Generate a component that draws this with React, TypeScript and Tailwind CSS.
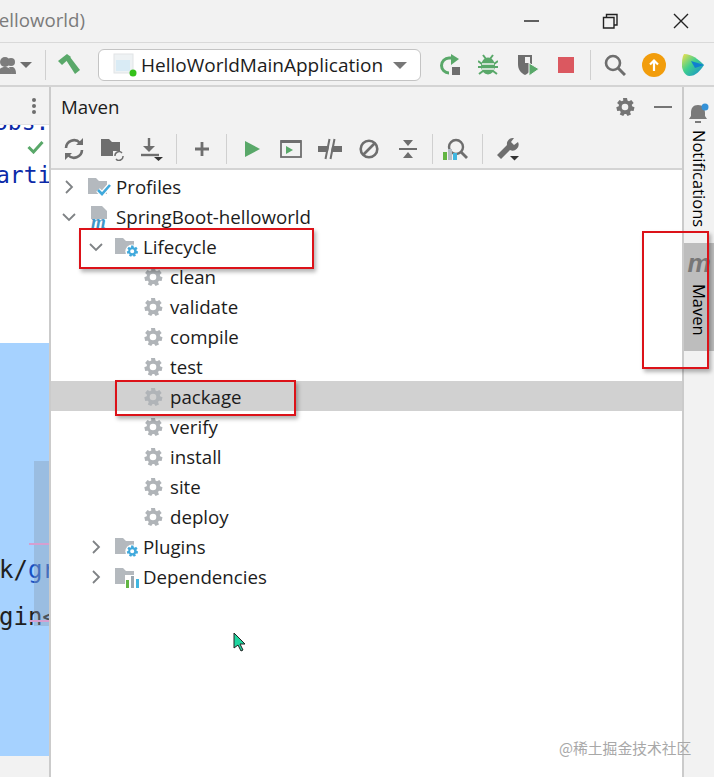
import type { ReactNode } from "react"

const GRAY = "#6e6e6e"
const GREEN = "#59a869"

const Svg = ({ size = 24, w, h, children }: { size?: number; w?: number; h?: number; children: ReactNode }) => (
  <svg width={w ?? size} height={h ?? size} viewBox={`0 0 ${w ?? size} ${h ?? size}`} className="block shrink-0">
    {children}
  </svg>
)

const Slot = ({ children }: { children: ReactNode }) => (
  <div className="flex h-[24px] w-[39px] shrink-0 items-center justify-center">{children}</div>
)

const Sep = () => <div className="mx-[5px] h-[30px] w-px shrink-0 bg-[#d0d0d0]" />

const Gear = ({ color = "#b0b4b8", size = 20 }: { color?: string; size?: number }) => (
  <svg width={size} height={size} viewBox="0 0 20 20" className="block shrink-0">
    <path
      fill={color}
      fillRule="evenodd"
      d="M8 1h4l.5 2.6 1.5.7 2.3-1.4 2.4 3-1.9 1.8.3 1.6 2.4 1-.9 3.700-2.600-.2-1 1.300 1 2.400-3.400 1.600-1.400-2.200h-1.600L8.200 19.100 4.800 17.500l1-2.400-1-1.300-2.600.2L1.300 10.300l2.400-1 .3-1.600L2.100 5.900l2.400-3L6.800 4.300 8.300 3.600zM10 6.700a3.300 3.300 0 1 0 0 6.600 3.300 3.300 0 0 0 0-6.600z"
    />
  </svg>
)

const Chevron = ({ open }: { open?: boolean }) => (
  <svg width={18} height={18} viewBox="0 0 18 18" className="block shrink-0">
    <path d={open ? "M3 6l6 6 6-6" : "M6 3l6 6-6 6"} fill="none" stroke="#7f8285" strokeWidth={1.8} />
  </svg>
)

const Folder = ({ children }: { children?: ReactNode }) => (
  <Svg w={26} h={22}>
    <path d="M1 2h8l3 3h8v13H1z" fill="#b4b9be" />
    {children}
  </Svg>
)

const BlueGear = () => (
  <g transform="translate(12 9) scale(0.62)">
    <circle cx="10" cy="10" r="11" fill="#fff" />
    <path
      fill="#40a9dc"
      fillRule="evenodd"
      d="M8 1h4l.5 2.600 1.500.7 2.300-1.400 2.400 3-1.900 1.800.3 1.600 2.400 1-.9 3.700-2.600-.2-1 1.300 1 2.400-3.400 1.600-1.400-2.200h-1.600L8.200 19.100 4.800 17.500l1-2.400-1-1.300-2.600.2L1.300 10.300l2.400-1 .3-1.600L2.100 5.900l2.400-3L6.800 4.300 8.300 3.600zM10 6.700a3.300 3.300 0 1 0 0 6.600 3.300 3.300 0 0 0 0-6.600z"
    />
  </g>
)

const ToolWindowRow = ({
  indent,
  open,
  icon,
  label,
}: {
  indent: string
  open?: boolean
  icon: ReactNode
  label: string
}) => (
  <div className={`flex h-[30px] items-center pt-[2px] ${indent}`}>
    <Chevron open={open} />
    <div className="ml-[9px] flex w-[26px] justify-center">{icon}</div>
    <span className="ml-[3px]">{label}</span>
  </div>
)

const GoalRow = ({ label, className = "" }: { label: string; className?: string }) => (
  <div className={`flex h-[30px] items-center pl-[92px] pt-[2px] ${className}`}>
    <Gear />
    <span className="ml-[7px]">{label}</span>
  </div>
)

const MavenFile = () => (
  <Svg w={26} h={24}>
    <path d="M4 1h11l5 5v14H4z" fill="#b4b9be" />
    <rect x="1" y="14" width="24" height="10" fill="#fff" />
    <text x="4" y="23" fontFamily="Liberation Serif, serif" fontStyle="italic" fontWeight="700" fontSize="19" fill="#3f97c9">
      m
    </text>
  </Svg>
)

export default function App() {
  const goals = ["clean", "validate", "compile", "test"]
  const goalsAfter = ["verify", "install", "site", "deploy"]

  return (
    <div className="relative flex h-[777px] w-[714px] flex-col overflow-hidden bg-[#f2f2f2] font-['Open_Sans','Noto_Sans',sans-serif] text-[18.7px] text-[#1c1c1c]">
      {/* title bar */}
      <div className="flex h-[43px] shrink-0 items-center border-b border-[#d9d9d9]">
        <div className="flex w-[85px] justify-end overflow-hidden whitespace-nowrap pb-[2px] text-[#7b7b7b]">helloworld)</div>
        <div className="ml-auto flex items-center pr-[25px]">
          <Svg w={16} h={16}>
            <path d="M0 8h15" stroke="#222" strokeWidth={1.4} />
          </Svg>
          <div className="ml-[62px]">
            <Svg w={16} h={16}>
              <path d="M1.500 4.500h10.500v10.500H1.500zM4.500 4.500V1.500h10.500v10.500H12" fill="none" stroke="#222" strokeWidth={1.4} />
            </Svg>
          </div>
          <div className="ml-[55px]">
            <Svg w={16} h={16}>
              <path d="M1 1l14 14M15 1L1 15" stroke="#222" strokeWidth={1.4} />
            </Svg>
          </div>
        </div>
      </div>

      {/* main toolbar */}
      <div className="flex h-[44px] shrink-0 items-center border-b-2 border-[#d4d4d4] pt-[2px]">
        <Svg w={16} h={24}>
          <circle cx="5" cy="9" r="5" fill="#7c7c7c" />
          <path d="M-2 21c0-5 3-7 7-7s7 2 7 7z" fill="#7c7c7c" />
          <circle cx="11" cy="9" r="4" fill="#7c7c7c" />
          <path d="M9 14h4c2 1 3 3 3 7H12z" fill="#7c7c7c" />
        </Svg>
        <div className="ml-[4px]">
          <Svg w={12} h={8}>
            <path d="M0 1h12L6 7z" fill="#6e6e6e" />
          </Svg>
        </div>
        <div className="ml-[13px] h-[30px] w-px bg-[#d0d0d0]" />
        <div className="ml-[11px]">
          <Svg w={24} h={24}>
            <path d="M1 8L10 1l4 3-9 8z" fill={GREEN} />
            <path d="M9 7l4-3 10 13-5 4z" fill={GREEN} />
          </Svg>
        </div>
        <div className="ml-[17px] flex h-[32px] w-[323px] items-center rounded-[6px] border border-[#c4c4c4] bg-white pl-[14px]">
          <Svg w={24} h={24}>
            <rect x="1" y="1" width="19" height="19" fill="#eef2f4" stroke="#e1e4e6" />
            <rect x="3" y="7" width="14" height="11" fill="#d9ebf5" />
            <circle cx="20" cy="20" r="3.500" fill="#35c21b" />
          </Svg>
          <span className="ml-[4px] whitespace-nowrap text-[19px]">HelloWorldMainApplication</span>
          <div className="ml-auto mr-[13px]">
            <Svg w={14} h={9}>
              <path d="M0 1h14L7 8z" fill="#777" />
            </Svg>
          </div>
        </div>
        <div className="ml-[18px]">
          <Svg w={22} h={22}>
            <path d="M10 19a7.500 7.500 0 0 1 0-15h4" fill="none" stroke={GREEN} strokeWidth={3} />
            <path d="M12 0l8 5-8 6z" fill={GREEN} />
            <rect x="13" y="13" width="8" height="8" fill="#6e6e6e" />
          </Svg>
        </div>
        <div className="ml-[17px]">
          <Svg w={20} h={22}>
            <ellipse cx="10" cy="12" rx="7" ry="8.500" fill={GREEN} />
            <path d="M0 7l4 3M20 7l-4 3M0 13h4M20 13h-4M1 20l4-3M19 20l-4-3M5 1l3 4M15 1l-3 4" stroke={GREEN} strokeWidth={2} />
            <path d="M4 10h12M4 15h12" stroke="#f2f2f2" strokeWidth={1.400} />
          </Svg>
        </div>
        <div className="ml-[18px]">
          <Svg w={24} h={24}>
            <path d="M2 2h14v9c0 6-3 9-7 11-4-2-7-5-7-11z" fill="#6e6e6e" />
            <path d="M9 4h5v6H9z" fill="#f2f2f2" />
            <path d="M13 10l10 6-10 7z" fill={GREEN} stroke="#f2f2f2" />
          </Svg>
        </div>
        <div className="ml-[18px] h-[16px] w-[16px] bg-[#db5860]" />
        <div className="ml-[16px] h-[30px] w-px bg-[#d0d0d0]" />
        <div className="ml-[13px]">
          <Svg w={22} h={22}>
            <circle cx="9" cy="9" r="7" fill="none" stroke="#6e6e6e" strokeWidth={2.600} />
            <path d="M14 14l7 7" stroke="#6e6e6e" strokeWidth={3} />
          </Svg>
        </div>
        <div className="ml-[16px] flex h-[24px] w-[24px] items-center justify-center rounded-full bg-[#f29d0c]">
          <Svg w={12} h={14}>
            <path d="M6 13V3M2 6.500L6 2.500l4 4" fill="none" stroke="#fff" strokeWidth={2.200} />
          </Svg>
        </div>
        <div className="ml-[16px]">
          <svg width={22} height={24} viewBox="0 0 22 24" className="block shrink-0">
            <defs>
              <linearGradient id="edge" x1="0" y1="0" x2="1" y2="1">
                <stop offset="0" stopColor="#f4e04a" />
                <stop offset="0.45" stopColor="#3fcf8e" />
                <stop offset="1" stopColor="#1186d8" />
              </linearGradient>
            </defs>
            <path d="M2 1c8 0 14 5 20 11-4 6-8 11-15 11C5 23 1 20 0 14 0 8 0 4 2 1z" fill="url(#edge)" />
            <path d="M9 8l13 4-9 3z" fill="#0f7fd0" />
          </svg>
        </div>
      </div>

      {/* body */}
      <div className="flex min-h-0 flex-1">
        {/* editor sliver */}
        <div className="flex w-[51px] shrink-0 flex-col overflow-hidden border-r-2 border-[#cbcbcb]">
          <div className="flex h-[38px] shrink-0 items-center justify-end border-b border-[#e2e2e2] pr-[13px]">
            <div className="flex flex-col gap-[2px]">
              <div className="h-[4px] w-[4px] rounded-full bg-[#6e6e6e]" />
              <div className="h-[4px] w-[4px] rounded-full bg-[#6e6e6e]" />
              <div className="h-[4px] w-[4px] rounded-full bg-[#6e6e6e]" />
            </div>
          </div>
          <div className="relative h-[218px] shrink-0 overflow-hidden bg-white font-['DejaVu_Sans_Mono',monospace] text-[23px] text-[#0b2aa8]">
            <div className="-mt-[20px] -ml-[6px] whitespace-nowrap">obs:</div>
            <div className="absolute right-[5px] top-[15px]">
              <Svg w={17} h={14}>
                <path d="M1.500 7l5 5 9-10" fill="none" stroke={GREEN} strokeWidth={3} />
              </Svg>
            </div>
            <div className="mt-[18px] -ml-[4px] whitespace-nowrap">arti</div>
          </div>
          <div className="relative h-[413px] shrink-0 overflow-hidden bg-[#a6d2ff] font-['DejaVu_Sans_Mono',monospace] text-[24px] text-[#202020]">
            <div className="mt-[209px] whitespace-nowrap">
              <span className="-ml-[1px]">k/</span>
              <span className="text-[#1750c4]">gr</span>
            </div>
            <div className="mt-[11px] -ml-[1px] whitespace-nowrap">gin&lt;</div>
            <div className="absolute right-0 top-[118px] h-[165px] w-[15px] bg-[#8a9db5]/40" />
            <div className="absolute right-0 top-[200px] h-[2px] w-[20px] bg-[#d59fd0]" />
            <div className="absolute right-0 top-[277px] h-[2px] w-[20px] bg-[#d59fd0]" />
          </div>
          <div className="flex-1 bg-[#f2f2f2]" />
        </div>

        {/* maven panel */}
        <div className="flex min-w-0 flex-1 flex-col">
          <div className="flex h-[38px] shrink-0 items-center pl-[10px] pr-[10px] pt-[2px]">
            <span>Maven</span>
            <div className="ml-auto">
              <Gear color="#757575" size={20} />
            </div>
            <div className="ml-[19px] h-[2px] w-[18px] bg-[#757575]" />
          </div>
          <div className="flex h-[45px] shrink-0 items-center border-b-2 border-[#d4d4d4] pl-[3px] pt-[4px]">
            <Slot>
              <Svg w={22} h={22}>
                <path d="M3 10a8 8 0 0 1 14-5M19 12a8 8 0 0 1-14 5" fill="none" stroke={GRAY} strokeWidth={2.600} />
                <path d="M13 7h7V0zM9 15H2v7z" fill={GRAY} />
              </Svg>
            </Slot>
            <Slot>
              <Svg w={24} h={24}>
                <path d="M0 2h8l3 3h8v9h-7v5H0z" fill={GRAY} />
                <path d="M14 19a4 4 0 0 1 7-3M22 19a4 4 0 0 1-7 3" fill="none" stroke={GRAY} strokeWidth={1.500} />
              </Svg>
            </Slot>
            <Slot>
              <Svg w={24} h={24}>
                <path d="M9 1v11" stroke={GRAY} strokeWidth={2.400} />
                <path d="M3 9l6 6 6-6z" fill={GRAY} />
                <path d="M1 18h18" stroke={GRAY} strokeWidth={2.400} />
                <path d="M14 20h9l-4.500 4z" fill="#333" />
              </Svg>
            </Slot>
            <Sep />
            <Slot>
              <Svg w={18} h={18}>
                <path d="M9 2v14M2 9h14" stroke={GRAY} strokeWidth={2.800} />
              </Svg>
            </Slot>
            <Sep />
            <Slot>
              <Svg w={16} h={18}>
                <path d="M1 1l15 8-15 8z" fill={GREEN} />
              </Svg>
            </Slot>
            <Slot>
              <Svg w={22} h={20}>
                <rect x="1" y="2" width="20" height="16" fill="none" stroke={GRAY} strokeWidth={1.800} />
                <rect x="1" y="1" width="20" height="3" fill={GRAY} />
                <path d="M6 7l7 4-7 4z" fill={GREEN} />
              </Svg>
            </Slot>
            <Slot>
              <Svg w={24} h={22}>
                <path d="M0 8h24v6H0z" fill={GRAY} />
                <path d="M10 21l4-20" stroke="#f2f2f2" strokeWidth={3} />
                <path d="M7.500 21l4-20M12.500 21l4-20" stroke={GRAY} strokeWidth={2} />
              </Svg>
            </Slot>
            <Slot>
              <Svg w={20} h={20}>
                <circle cx="10" cy="10" r="8.300" fill="none" stroke={GRAY} strokeWidth={2.600} />
                <path d="M4 16L16 4" stroke={GRAY} strokeWidth={2.600} />
              </Svg>
            </Slot>
            <Slot>
              <Svg w={18} h={20}>
                <path d="M0 10h18" stroke={GRAY} strokeWidth={2} />
                <path d="M4 1h10L9 7zM4 19h10L9 13z" fill={GRAY} />
              </Svg>
            </Slot>
            <Sep />
            <Slot>
              <div className="-translate-x-[3px]">
                <Svg w={26} h={22}>
                  <circle cx="14" cy="9" r="7" fill="none" stroke={GRAY} strokeWidth={2.400} />
                  <path d="M19 14l6 6" stroke={GRAY} strokeWidth={2.800} />
                  <rect x="1" y="14" width="4" height="8" fill="#62b543" />
                  <rect x="6" y="11" width="4" height="11" fill="#b5bec6" />
                  <rect x="11" y="15" width="4" height="7" fill="#40b6e0" />
                </Svg>
              </div>
            </Slot>
            <Sep />
            <Slot>
              <Svg w={24} h={24}>
                <path d="M1 18L11 8a6 6 0 0 1 7-7l-3 4 3 3 4-3a6 6 0 0 1-8 8L5 22z" fill={GRAY} />
                <path d="M14 19h9l-4.500 4.500z" fill="#333" />
              </Svg>
            </Slot>
          </div>
          <div className="flex-1 overflow-hidden bg-white pt-[1px]">
            <ToolWindowRow
              indent="pl-[9px]"
              label="Profiles"
              icon={
                <Folder>
                  <path d="M11 14l4 4 8-9" fill="none" stroke="#fff" strokeWidth={5} />
                  <path d="M11 14l4 4 8-9" fill="none" stroke="#40a9dc" strokeWidth={2.600} />
                </Folder>
              }
            />
            <ToolWindowRow indent="pl-[9px]" open label="SpringBoot-helloworld" icon={<MavenFile />} />
            <ToolWindowRow
              indent="pl-[36px]"
              open
              label="Lifecycle"
              icon={
                <Folder>
                  <BlueGear />
                </Folder>
              }
            />
            {goals.map((g) => (
              <GoalRow key={g} label={g} />
            ))}
            <GoalRow label="package" className="bg-[#d1d1d1]" />
            {goalsAfter.map((g) => (
              <GoalRow key={g} label={g} />
            ))}
            <ToolWindowRow
              indent="pl-[36px]"
              label="Plugins"
              icon={
                <Folder>
                  <BlueGear />
                </Folder>
              }
            />
            <ToolWindowRow
              indent="pl-[36px]"
              label="Dependencies"
              icon={
                <Folder>
                  <rect x="11" y="9" width="15" height="13" fill="#fff" />
                  <rect x="12" y="14" width="3" height="8" fill="#62b543" />
                  <rect x="17" y="10" width="3" height="12" fill="#9aa7b0" />
                  <rect x="22" y="13" width="3" height="9" fill="#40b6e0" />
                </Folder>
              }
            />
          </div>
        </div>

        {/* right tool strip */}
        <div className="flex w-[32px] shrink-0 flex-col items-center border-l-2 border-[#cbcbcb]">
          <div className="mt-[15px]">
            <Svg w={22} h={22}>
              <path d="M10 3c-5 0-7 3-7 8v3l-2 3h18l-2-3v-3c0-5-2-8-7-8z" fill="#7a7a7a" />
              <rect x="7" y="19" width="6" height="2" fill="#7a7a7a" />
              <circle cx="17" cy="5" r="3.500" fill="#3592d8" />
            </Svg>
          </div>
          <div className="mt-[6px] text-[16.500px] leading-[20px] text-black [writing-mode:vertical-rl]">Notifications</div>
          <div className="mt-[16px] flex h-[108px] w-full flex-col items-center overflow-hidden bg-[#bdbdbd]">
            <span className="mt-[5px] font-['Liberation_Sans',sans-serif] text-[26px] font-bold italic leading-[30px] text-[#777]">m</span>
            <span className="mt-[6px] text-[16.500px] leading-[20px] text-black [writing-mode:vertical-rl]">Maven</span>
          </div>
        </div>
      </div>

      {/* annotations drawn over the screenshot */}
      <div className="absolute left-[79px] top-[228px] h-[41px] w-[235px] border-2 border-[#dc1219] shadow-[2px_3px_4px_rgba(0,0,0,0.3)]" />
      <div className="absolute left-[115px] top-[380px] h-[36px] w-[181px] border-2 border-[#dc1219] shadow-[2px_3px_4px_rgba(0,0,0,0.3)]" />
      <div className="absolute left-[642px] top-[231px] h-[138px] w-[67px] border-2 border-[#dc1219] shadow-[2px_3px_4px_rgba(0,0,0,0.3)]" />

      {/* mouse cursor */}
      <div className="absolute left-[233px] top-[632px]">
        <Svg w={13} h={20}>
          <path d="M1 1v15l4-3 3 6 2-1-3-6h5z" fill="#1fd6a0" stroke="#222" />
        </Svg>
      </div>

      <div className="absolute left-[559px] top-[738px] whitespace-nowrap font-['Noto_Sans_CJK_SC',sans-serif] text-[14.800px] leading-[20px] text-[#a8a8a8]">
        @稀土掘金技术社区
      </div>
    </div>
  )
}
